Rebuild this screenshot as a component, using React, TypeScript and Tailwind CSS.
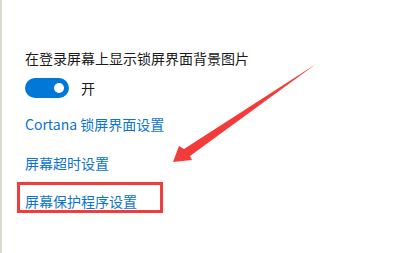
import React from "react";

export default function App() {
  const font = { fontFamily: '"Noto Sans CJK SC", "Noto Sans", sans-serif' };
  return (
    <div className="relative w-[407px] h-[253px] bg-white overflow-hidden flex" style={font}>
      <div className="w-[2px] h-full bg-[#dcd8cf]" />
      <div className="flex flex-col pl-[23px] pt-[48px]">
        <div className="text-[14px] leading-[20px] text-[#1a1a1a]">在登录屏幕上显示锁屏界面背景图片</div>
        <div className="flex items-center mt-[10px] h-[20px]">
          <div className="w-[44px] h-[20px] rounded-full bg-[#0078d7] flex items-center justify-end pr-[5px]">
            <div className="w-[10px] h-[10px] rounded-full bg-white" />
          </div>
          <span className="ml-[12px] text-[14px] leading-[20px] text-[#1a1a1a]">开</span>
        </div>
        <div className="mt-[16px] text-[14px] leading-[20px] text-[#0a74d0]">Cortana 锁屏界面设置</div>
        <div className="mt-[19px] text-[14px] leading-[20px] text-[#0a74d0]">屏幕超时设置</div>
        <div className="mt-[18px] text-[14px] leading-[20px] text-[#0a74d0]">屏幕保护程序设置</div>
      </div>
      <div className="absolute left-[17px] top-[182px] w-[146px] h-[31px] border-[3px] border-[#f43b3b]" />
      <svg className="absolute left-0 top-0" width="407" height="253" viewBox="0 0 407 253">
        <polygon
          points="316,64 184,149 179,146 173,162 192,160 190,156"
          fill="#f43b3b"
        />
      </svg>
    </div>
  );
}
